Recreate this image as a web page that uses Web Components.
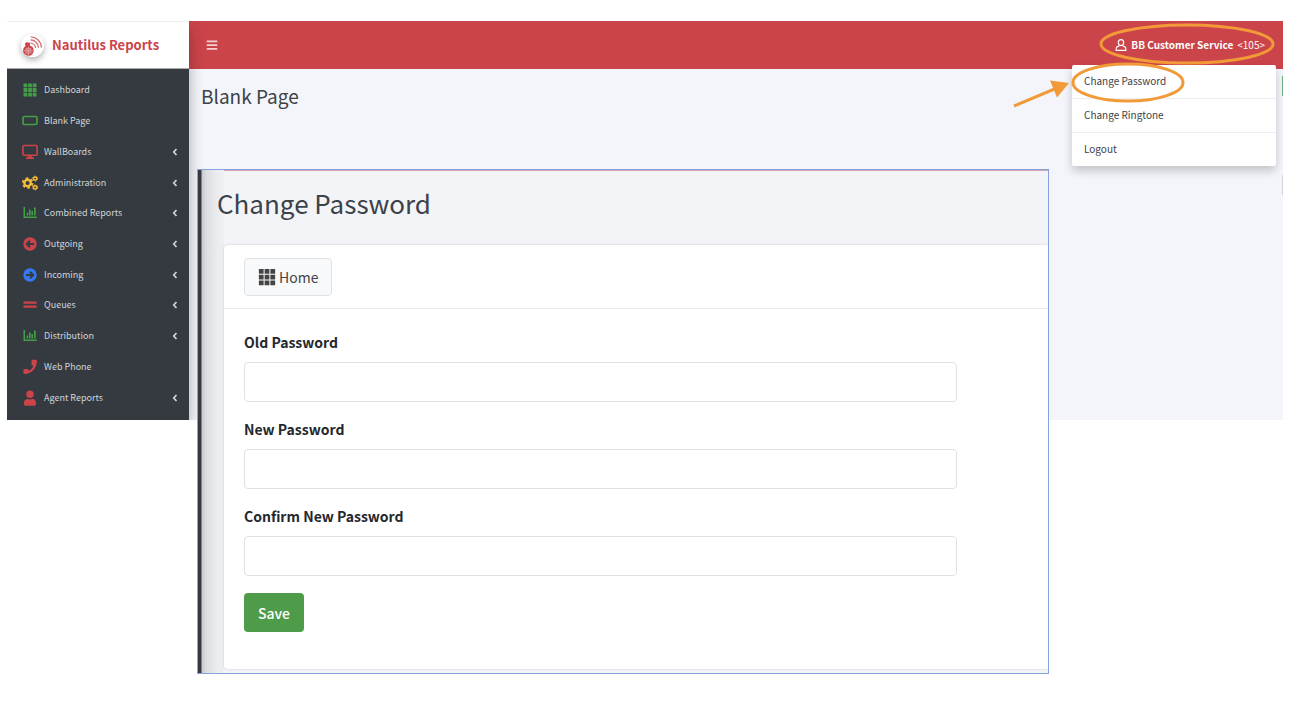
<!DOCTYPE html>
<html lang="en">
<head>
<meta charset="utf-8">
<title>Nautilus Reports</title>
<style>
  body { margin: 0; background: #fff; font-family: "Noto Sans CJK SC", "Open Sans", sans-serif; color: #343a40; }
</style>
</head>
<body>
<nautilus-page></nautilus-page>

<script>
const ICONS = {
  grid: { v: '0 0 16 16', s: '<path d="M1.500 1.500h3.800v3.800H1.500zM6.100 1.500h3.800v3.800H6.100zM10.700 1.500h3.800v3.800h-3.800zM1.500 6.100h3.800v3.800H1.500zM6.100 6.100h3.800v3.800H6.100zM10.700 6.100h3.800v3.800h-3.800zM1.500 10.700h3.800v3.800H1.500zM6.100 10.700h3.800v3.800H6.100zM10.700 10.700h3.800v3.800h-3.800z"/>' },
  blank: { v: '0 0 16 16', s: '<rect x="1" y="3.500" width="14" height="8" rx="1.600" fill="none" stroke="currentColor" stroke-width="1.700"/>' },
  monitor: { v: '0 0 16 16', s: '<rect x=".9" y="1.500" width="14.200" height="9.800" rx="1.200" fill="none" stroke="currentColor" stroke-width="1.600"/><path d="M6.400 11.500h3.200l.3 1.800H12V15H4v-1.700h2.100z"/>' },
  cogs: { v: '0 0 16 16', s: '<g fill="none" stroke="currentColor"><circle cx="5.600" cy="8" r="3.200" stroke-width="2.400"/><circle cx="5.600" cy="8" r="4.800" stroke-width="2" stroke-dasharray="2.500 2.527"/><circle cx="13.100" cy="3.600" r="1.700" stroke-width="1.500"/><circle cx="13.100" cy="3.600" r="2.500" stroke-width=".9" stroke-dasharray="1.300 1.318"/><circle cx="13.100" cy="12.400" r="1.700" stroke-width="1.500"/><circle cx="13.100" cy="12.400" r="2.500" stroke-width=".9" stroke-dasharray="1.300 1.318"/></g>' },
  chart: { v: '0 0 16 16', s: '<path d="M1.500 2H3v9.500h11.800V13H1.500z"/><path d="M4.600 7.500h1.600v3H4.600zM7 4.500h1.600v6H7zM9.400 6H11v4.500H9.400zM12 2.500h1.700v8H12z"/>' },
  left: { v: '0 0 16 16', s: '<circle cx="8" cy="8" r="6.700"/><path d="M12 8H5M8 4.800 4.800 8 8 11.200" fill="none" stroke="#343a40" stroke-width="2"/>' },
  right: { v: '0 0 16 16', s: '<circle cx="8" cy="8" r="6.700"/><path d="M4 8h7M8 4.800 11.200 8 8 11.200" fill="none" stroke="#343a40" stroke-width="2"/>' },
  lines: { v: '0 0 16 16', s: '<path d="M1.500 4.500h13v2.200h-13zM1.500 8.500h13v2.200h-13z"/>' },
  phone: { v: '0 0 16 16', s: '<path d="M11 .7h2.600c.8 0 1.300.5 1.300 1.200C14.900 9 9.500 15 2.700 15c-.8 0-1.300-.5-1.300-1.200v-2.500c0-.9.6-1.400 1.400-1.400h2.500c.7 0 1.100.4 1.200 1.100l.1.800c2.300-1 4-2.800 4.800-5.100l-.8-.2c-.7-.1-1.100-.6-1.100-1.200V2.200c0-.9.600-1.500 1.500-1.500z"/>' },
  user: { v: '-48 -20 544 544', s: '<path d="M224 256a128 128 0 1 0 0-256 128 128 0 1 0 0 256zm89.600 32h-16.700a174 174 0 0 1-145.800 0h-16.700A134.400 134.400 0 0 0 20 422.400V464c0 26.500 21.500 48 48 48h312c26.500 0 48-21.500 48-48v-41.600c0-74.200-40.200-134.400-114.400-134.400z"/>' },
  userline: { v: '0 0 16 16', s: '<g fill="none" stroke="currentColor" stroke-width="1.500"><ellipse cx="8" cy="4.800" rx="3.600" ry="4"/><path d="M5.800 9.500C3 9.600 1.500 11 1.500 13.500v1.600h13v-1.600c0-2.500-1.500-3.900-4.300-4"/></g>' },
  chevron: { v: '0 0 16 16', s: '<path d="M11 2 5.500 8l5.500 6" fill="none" stroke="currentColor" stroke-width="3.400"/>' },
  menu: { v: '0 0 16 16', s: '<path d="M1 2h14v2.200H1zM1 7h14v2.200H1zM1 12h14v2.200H1z"/>' },
  logo: { v: '0 0 24 24', s: '<g fill="none" stroke="currentColor"><path d="M10 9.500C12.500 9.500 15 11.500 15.200 14.500M10 6.300c4-.3 7.800 3 8.300 8M10 3c5.800-.2 10.800 4.500 11.400 11.200" stroke-width="1.500" opacity=".75"/></g><path d="M4 10.200 5.500 8.500 9.500 9l-.3 3c2.600.8 4.200 2.600 4 5.400C13 21 10.500 23 7.500 22.600 4.500 22.300 2 20 2.200 17c.1-2 1-3.400 2.600-4.500z"/><g fill="none" stroke="#fff" stroke-width=".7" opacity=".6"><circle cx="7.700" cy="17.500" r="2.800"/><path d="M7.700 12.800v9.400M3 17.500h9.500M4.500 14.300l6.500 6.500M11 14.300l-6.500 6.500"/></g>' }
};

class AppIcon extends HTMLElement {
  connectedCallback() {
    const i = ICONS[this.getAttribute('name')];
    this.attachShadow({ mode: 'open' }).innerHTML = `
      <style>
        :host { display: inline-block; flex: none; width: var(--icon-size, 16px); height: var(--icon-size, 16px); }
        svg { display: block; width: 100%; height: 100%; }
      </style>
      <svg viewBox="${i.v}" fill="currentColor" aria-hidden="true">${i.s}</svg>`;
  }
}
customElements.define('app-icon', AppIcon);

class NavItem extends HTMLElement {
  connectedCallback() {
    this.attachShadow({ mode: 'open' }).innerHTML = `
      <style>
        :host { display: flex; }
        a { flex: 1; display: flex; align-items: center; gap: 6px; padding: 0 10px 0 15px; color: #d0d4d9; font-size: 9px; line-height: 16px; text-decoration: none; }
        .icon { color: var(--tone); }
        span { flex: 1; }
        .more { --icon-size: 8px; }
      </style>
      <a href="#"><app-icon class="icon" name="${this.getAttribute('icon')}"></app-icon><span><slot></slot></span>${
        this.hasAttribute('more') ? '<app-icon class="more" name="chevron"></app-icon>' : ''}</a>`;
  }
}
customElements.define('nav-item', NavItem);

class SideBar extends HTMLElement {
  connectedCallback() {
    this.attachShadow({ mode: 'open' }).innerHTML = `
      <style>
        :host { display: flex; flex-direction: column; background: #343a40; position: relative; z-index: 1; box-shadow: 0 8px 14px rgba(0,0,0,.3); clip-path: inset(0 -20px 0 0); }
        .brand { display: flex; align-items: center; gap: 8px; box-sizing: border-box; height: 48px; padding-left: 14px; background: #fff; border-top: 1px solid #eee; border-bottom: 1px solid #aaa; color: #cb444a; font-size: 13px; font-weight: 700; line-height: 20px; text-decoration: none; }
        .brand app-icon { --icon-size: 23px; background: #fff; border-radius: 50%; box-shadow: 0 3px 6px rgba(0,0,0,.3); }
        nav { flex: 1; display: grid; grid-auto-rows: 1fr; min-height: 338px; padding: 6px 0 7px; }
        .green { --tone: #449d48; } .red { --tone: #cb444a; } .yellow { --tone: #f5bd36; } .blue { --tone: #3478f6; }
      </style>
      <a class="brand" href="#"><app-icon name="logo"></app-icon><span>Nautilus Reports</span></a>
      <nav>
        <nav-item class="green" icon="grid">Dashboard</nav-item>
        <nav-item class="green" icon="blank">Blank Page</nav-item>
        <nav-item class="red" icon="monitor" more>WallBoards</nav-item>
        <nav-item class="yellow" icon="cogs" more>Administration</nav-item>
        <nav-item class="green" icon="chart" more>Combined Reports</nav-item>
        <nav-item class="red" icon="left" more>Outgoing</nav-item>
        <nav-item class="blue" icon="right" more>Incoming</nav-item>
        <nav-item class="red" icon="lines" more>Queues</nav-item>
        <nav-item class="green" icon="chart" more>Distribution</nav-item>
        <nav-item class="red" icon="phone">Web Phone</nav-item>
        <nav-item class="red" icon="user" more>Agent Reports</nav-item>
      </nav>`;
  }
}
customElements.define('side-bar', SideBar);

class UserMenu extends HTMLElement {
  connectedCallback() {
    this.attachShadow({ mode: 'open' }).innerHTML = `
      <style>
        :host { display: block; }
        button { display: flex; align-items: center; gap: 4px; margin: 0; padding: 0; border: 0; background: none; color: #fff; font: inherit; font-size: 10px; line-height: 16px; }
        button app-icon { --icon-size: 12px; }
        ul { position: absolute; z-index: 2; top: 44px; right: 7px; width: 204px; margin: 0; padding: 0; list-style: none; background: #fff; border-radius: 2px; box-shadow: 0 5px 10px rgba(0,0,0,.2); }
        li + li { border-top: 1px solid #eceef0; }
        a { display: block; padding: 8px 12px 9px; color: #3c4248; font-size: 10px; line-height: 16px; text-decoration: none; }
      </style>
      <button type="button" aria-haspopup="true" aria-expanded="true"><app-icon name="userline"></app-icon><b>BB Customer Service</b><span>&lt;105&gt;</span></button>
      <ul><li><a href="#">Change Password</a></li><li><a href="#">Change Ringtone</a></li><li><a href="#">Logout</a></li></ul>`;
  }
}
customElements.define('user-menu', UserMenu);

class TopBar extends HTMLElement {
  connectedCallback() {
    this.attachShadow({ mode: 'open' }).innerHTML = `
      <style>
        :host { display: flex; align-items: center; justify-content: space-between; height: 48px; padding: 0 18px 0 17px; background: #cb444a; }
        .toggle { display: flex; margin: 0; padding: 0; border: 0; background: none; color: #f3d0d2; --icon-size: 12px; }
      </style>
      <button class="toggle" type="button" aria-label="Toggle menu"><app-icon name="menu"></app-icon></button>
      <user-menu></user-menu>`;
  }
}
customElements.define('top-bar', TopBar);

class FormField extends HTMLElement {
  connectedCallback() {
    this.attachShadow({ mode: 'open' }).innerHTML = `
      <style>
        :host { display: grid; gap: 10px; }
        label { color: #24282c; font-size: 14px; font-weight: 700; line-height: 20px; }
        input { box-sizing: border-box; width: 100%; height: 40px; margin: 0; padding: 0 12px; border: 1px solid #dde2e6; border-radius: 4px; background: #fff; font: inherit; font-size: 14px; }
      </style>
      <label for="field"><slot></slot></label><input id="field" type="password">`;
  }
}
customElements.define('form-field', FormField);

class PasswordPanel extends HTMLElement {
  connectedCallback() {
    this.attachShadow({ mode: 'open' }).innerHTML = `
      <style>
        :host { display: flex; box-sizing: border-box; border: 1px solid #86a3e0; background: #f3f4f8; }
        .edge { flex: none; width: 26px; background: linear-gradient(90deg, #343a40 3px, #c9cacd 4px, #dedfe2 9px, #eaebef 18px, #eff0f4 26px); }
        main { flex: 1; min-width: 0; padding-bottom: 4px; }
        h1 { margin: 0 0 24px -7px; padding-top: 15px; color: #3c4248; font-size: 26px; font-weight: 400; line-height: 36px; }
        :host { box-shadow: inset 0 1px #d0a5b5; }
        .card { background: #fff; border-radius: 4px 0 0 4px; box-shadow: 0 0 2px rgba(0,0,0,.22); clip-path: inset(-4px 0 -4px -4px); }
        header { display: flex; padding: 13px 20px 12px; border-bottom: 1px solid #e9ebed; }
        .home { display: flex; align-items: center; gap: 2px; box-sizing: border-box; height: 38px; padding: 0 13px 0 12px; border: 1px solid #dfe1e3; border-radius: 4px; background: #f8f9fa; color: #444; font-size: 14px; line-height: 20px; text-decoration: none; --icon-size: 20px; }
        form { display: grid; justify-items: start; gap: 17px; max-width: 713px; padding: 23px 20px 37px; }
        form-field { width: 100%; }
        .save { height: 39px; margin: 0; padding: 0 14px; border: 0; border-radius: 4px; background: #4e9b4a; color: #fff; font: inherit; font-size: 14px; font-weight: 500; line-height: 20px; }
      </style>
      <div class="edge"></div>
      <main>
        <h1>Change Password</h1>
        <section class="card">
          <header><a class="home" href="#"><app-icon name="grid"></app-icon>Home</a></header>
          <form>
            <form-field>Old Password</form-field>
            <form-field>New Password</form-field>
            <form-field>Confirm New Password</form-field>
            <button class="save" type="button">Save</button>
          </form>
        </section>
      </main>`;
  }
}
customElements.define('password-panel', PasswordPanel);

class CalloutMarks extends HTMLElement {
  connectedCallback() {
    this.attachShadow({ mode: 'open' }).innerHTML = `
      <style>
        :host { display: block; position: absolute; z-index: 3; top: 0; right: 0; pointer-events: none; }
        svg { display: block; }
      </style>
      <svg width="283" height="100" viewBox="1000 21 283 100" fill="none" stroke="#f19a37" aria-hidden="true">
        <ellipse cx="1187" cy="44" rx="86" ry="19" stroke-width="3"/>
        <ellipse cx="1128" cy="82.500" rx="55" ry="18.500" stroke-width="3"/>
        <path d="M1014 106 1057 88" stroke-width="3"/>
        <path d="M1050 80.500 1069 83 1057 97.500z" fill="#f19a37" stroke="none"/>
      </svg>`;
  }
}
customElements.define('callout-marks', CalloutMarks);

class NautilusPage extends HTMLElement {
  connectedCallback() {
    this.attachShadow({ mode: 'open' }).innerHTML = `
      <style>
        :host { display: grid; align-items: start; padding: 21px 9px 45px 7px; }
        .app, password-panel { grid-area: 1 / 1; }
        .app { position: relative; display: grid; grid-template-columns: 182px 1fr; }
        .work { display: flex; flex-direction: column; background: #f4f5fa; }
        .content { flex: 1; display: flex; justify-content: space-between; padding: 13px 0 0 12px; }
        h2 { margin: 0; color: #3c4248; font-size: 19px; font-weight: 400; line-height: 28px; }
        .rail { display: grid; align-content: start; gap: 79px; width: 1px; margin-top: -6px; }
        .rail i { height: 20px; background: #6fb384; }
        .rail i + i { background: #d3d5d8; }
        password-panel { z-index: 2; margin: 148px 234px 0 190px; }
      </style>
      <div class="app">
        <side-bar></side-bar>
        <div class="work">
          <top-bar></top-bar>
          <div class="content"><h2>Blank Page</h2><div class="rail"><i></i><i></i></div></div>
        </div>
        <callout-marks></callout-marks>
      </div>
      <password-panel></password-panel>`;
  }
}
customElements.define('nautilus-page', NautilusPage);
</script>
</body>
</html>
